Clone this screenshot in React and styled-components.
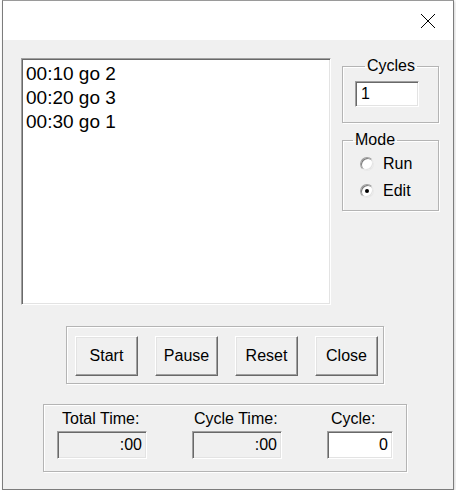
import React from "react";
import styled, { createGlobalStyle, css } from "styled-components";

const Global = createGlobalStyle`
  html, body { margin: 0; padding: 0; background: #ffffff; }
  body { font-family: "Liberation Sans", Arial, sans-serif; }
  * { box-sizing: border-box; }
`;

const sunken = css`
  border: 1px solid;
  border-color: #a0a0a0 #ffffff #ffffff #a0a0a0;
  box-shadow: inset 1px 1px #696969, inset -1px -1px #e3e3e3;
`;

const Window = styled.div`
  margin-left: 2px;
  width: 452px;
  height: 490px;
  border: 1px solid #7c7c7c;
  border-top-color: #9a9a9a;
  box-shadow: 1px 1px 3px rgba(0, 0, 0, 0.18);
  display: flex;
  flex-direction: column;
  background: #f0f0f0;
`;

const TitleBar = styled.div`
  height: 39px;
  background: #ffffff;
  display: flex;
  justify-content: flex-end;
  align-items: center;
  padding-right: 17px;
  flex-shrink: 0;
`;

const CloseGlyph = styled.svg`
  width: 16px;
  height: 16px;
  display: block;
`;

const Client = styled.div`
  flex: 1;
  padding: 18px 0 0 18px;
  display: flex;
  flex-direction: column;
  align-items: flex-start;
  font-size: 16px;
  color: #000;
`;

const TopRow = styled.div`
  display: flex;
  gap: 11px;
  align-items: flex-start;
`;

const ListBox = styled.div`
  ${sunken};
  width: 310px;
  height: 247px;
  background: #ffffff;
  padding: 3px 4px;
  font-size: 19px;
  line-height: 24px;
`;

const SideColumn = styled.div`
  display: flex;
  flex-direction: column;
  gap: 8px;
  margin-top: -1px;
`;

const Group = styled.fieldset`
  margin: 0;
  width: ${(p) => p.$w}px;
  min-inline-size: 0;
  border: 1px solid #b4b4b4;
  box-shadow: inset 1px 1px #ffffff, 1px 1px #ffffff;
  padding: ${(p) => p.$pad};
`;

const Legend = styled.legend`
  margin-left: ${(p) => p.$ml ?? 10}px;
  padding: 0 2px;
  font-size: 16px;
  line-height: 18px;
`;

const TextField = styled.div`
  ${sunken};
  width: ${(p) => p.$w}px;
  height: ${(p) => p.$h}px;
  background: ${(p) => (p.$white ? "#ffffff" : "#f0f0f0")};
  font-size: 16px;
  display: flex;
  align-items: center;
  justify-content: ${(p) => (p.$right ? "flex-end" : "flex-start")};
  padding: 0 4px 0 5px;
`;

const RadioRow = styled.label`
  display: flex;
  align-items: center;
  height: 24px;
  gap: 9px;
  padding-left: 17px;
  margin-top: ${(p) => p.$mt ?? 0}px;
  font-size: 16px;
`;

const RadioCircle = styled.span`
  flex-shrink: 0;
  width: 14px;
  height: 14px;
  border-radius: 50%;
  border: 1px solid;
  border-color: #a0a0a0 #e8e8e8 #e8e8e8 #a0a0a0;
  box-shadow: inset 1px 1px #7a7a7a, inset -1px -1px #e3e3e3;
  background: #ffffff;
  display: flex;
  align-items: center;
  justify-content: center;
  &::after {
    content: "";
    width: 4px;
    height: 4px;
    border-radius: 50%;
    background: ${(p) => (p.$checked ? "#000" : "transparent")};
  }
`;

const ButtonGroup = styled.div`
  margin: 21px 0 0 45px;
  width: 318px;
  height: 58px;
  border: 1px solid #b4b4b4;
  box-shadow: inset 1px 1px #ffffff, 1px 1px #ffffff;
  display: flex;
  gap: 17px;
  padding: 9px 0 0 8px;
`;

const Button = styled.button`
  width: 63px;
  height: 40px;
  background: #f0f0f0;
  border: 1px solid;
  border-color: #ffffff #696969 #696969 #ffffff;
  box-shadow: inset -1px -1px #a0a0a0, inset 1px 1px #e3e3e3;
  font-family: "Liberation Sans", Arial, sans-serif;
  font-size: 16px;
  color: #000;
  padding: 0;
  margin: 0;
`;

const TimeGroup = styled.div`
  margin: 20px 0 0 22px;
  width: 364px;
  height: 68px;
  border: 1px solid #b4b4b4;
  box-shadow: inset 1px 1px #ffffff, 1px 1px #ffffff;
  display: flex;
  gap: 45px;
  padding: 5px 0 0 13px;
`;

const TimeColumn = styled.div`
  display: flex;
  flex-direction: column;
  gap: 3px;
`;

const TimeLabel = styled.div`
  font-size: 16px;
  line-height: 18px;
  padding-left: ${(p) => p.$pl}px;
`;

export default function App() {
  return (
    <>
      <Global />
      <Window>
        <TitleBar>
          <CloseGlyph viewBox="0 0 16 16">
            <path d="M1 1 L15 15 M15 1 L1 15" stroke="#000" strokeWidth="1" fill="none" />
          </CloseGlyph>
        </TitleBar>
        <Client>
          <TopRow>
            <ListBox>
              <div>00:10 go 2</div>
              <div>00:20 go 3</div>
              <div>00:30 go 1</div>
            </ListBox>
            <SideColumn>
              <Group $w={97} $pad="6px 0 15px 12px">
                <Legend>Cycles</Legend>
                <TextField $w={64} $h={26} $white>1</TextField>
              </Group>
              <Group $w={97} $pad="3px 0 7px 0">
                <Legend>Mode</Legend>
                <RadioRow>
                  <RadioCircle />
                  Run
                </RadioRow>
                <RadioRow $mt={3}>
                  <RadioCircle $checked />
                  Edit
                </RadioRow>
              </Group>
            </SideColumn>
          </TopRow>
          <ButtonGroup>
            <Button>Start</Button>
            <Button>Pause</Button>
            <Button>Reset</Button>
            <Button>Close</Button>
          </ButtonGroup>
          <TimeGroup>
            <TimeColumn>
              <TimeLabel $pl={5}>Total Time:</TimeLabel>
              <TextField $w={90} $h={28} $right>:00</TextField>
            </TimeColumn>
            <TimeColumn>
              <TimeLabel $pl={2}>Cycle Time:</TimeLabel>
              <TextField $w={90} $h={28} $right>:00</TextField>
            </TimeColumn>
            <TimeColumn>
              <TimeLabel $pl={4}>Cycle:</TimeLabel>
              <TextField $w={66} $h={28} $white $right>0</TextField>
            </TimeColumn>
          </TimeGroup>
        </Client>
      </Window>
    </>
  );
}
